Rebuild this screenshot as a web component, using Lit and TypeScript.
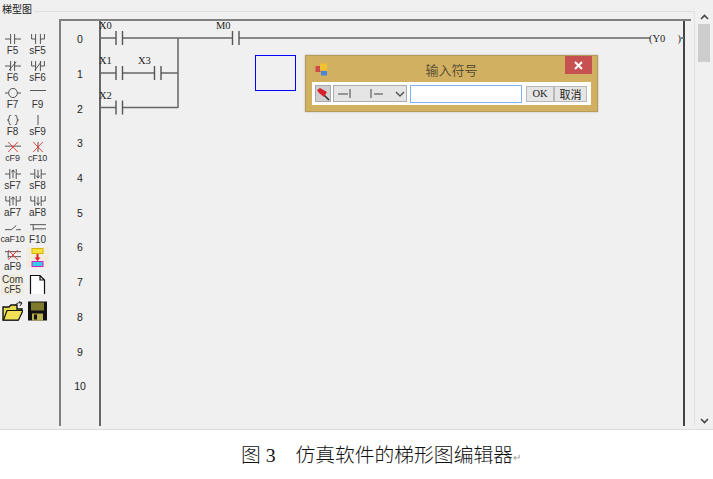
import { LitElement, html, css, svg } from "lit";
import { customElement } from "lit/decorators.js";

const G = "#444";
const line = (d: string, c = G, w = 1.1) => svg`<path d=${d} stroke=${c} stroke-width=${w} fill="none"/>`;
const no = "M0 6H7M7 0V12M12 0V12M12 6H20";
const branch = "M2 0V6H7M7 0V12M13 0V12M13 6H18M18 0V6";
const arrowUp = "M10 11V2M8 4L10 1L12 4";
const arrowDown = "M10 1V10M8 8L10 11L12 8";
const side = "M0 6H6M6 0V12M14 0V12M14 6H20";
const sideB = "M1 0V6H6M6 0V12M14 0V12M14 6H19M19 0V6";
const X = (cx: number, cy: number, r: number) => line(`M${cx - r} ${cy - r}L${cx + r} ${cy + r}M${cx + r} ${cy - r}L${cx - r} ${cy + r}`, "#e8302a", 1.1);

interface Tool { label: string; icon?: unknown; cls?: string; sm?: boolean }
const tools: Tool[] = [
  { label: "F5", icon: line(no) },
  { label: "sF5", icon: line(branch) },
  { label: "F6", icon: line(no + "M5 11L14 1") },
  { label: "sF6", icon: line(branch + "M6 11L14 1") },
  { label: "F7", icon: svg`${line("M0 6H4M16 6H20")}<circle cx="10" cy="6" r="5.5" stroke=${G} stroke-width="1.1" fill="none"/>` },
  { label: "F9", icon: line("M0 3H20") },
  { label: "F8", icon: line("M8 0Q5 0 5 3V5L3 6L5 7V9Q5 12 8 12M12 0Q15 0 15 3V5L17 6L15 7V9Q15 12 12 12") },
  { label: "sF9", icon: line("M10 0V12") },
  { label: "cF9", icon: svg`${line("M0 5H20")}${X(10, 6, 6)}`, sm: true },
  { label: "cF10", icon: svg`${line("M10 0V12")}${X(10, 6, 6)}`, sm: true },
  { label: "sF7", icon: line(side + arrowUp) },
  { label: "sF8", icon: line(side + arrowDown) },
  { label: "aF7", icon: line(sideB + arrowUp) },
  { label: "aF8", icon: line(sideB + arrowDown) },
  { label: "caF10", icon: line("M0 8H8L14 3M14 8H20"), sm: true },
  { label: "F10", icon: line("M0 2H20M4 2V9M4 7H20") },
  { label: "aF9", icon: svg`${line("M0 2H20M4 2V10M4 8H20")}${X(10, 6, 6)}` },
  {
    label: "", cls: "tint",
    icon: svg`<rect x="5" y="1.5" width="11" height="5" fill="#f5e23c" stroke="#d8b000"/>
      <path d="M10.5 7V11" stroke="#e02020" stroke-width="2"/><path d="M7.5 10.5L10.5 14L13.5 10.5Z" fill="#e02020"/>
      <rect x="5" y="14.5" width="11" height="5" fill="#38c8e8" stroke="#d020c0"/>`,
  },
  { label: "Com", cls: "com" },
  {
    label: "", cls: "big",
    icon: svg`<path d="M3.5 1.5H13L17.5 6V20.5H3.5Z M13 1.5V6H17.5" fill="#fff" stroke="#111" stroke-width="1.2"/>`,
  },
  {
    label: "", cls: "big",
    icon: svg`<path d="M1 6H7L9 4H15V8H20L16 19H1Z" fill="#e6dc50" stroke="#111" stroke-width="1.4"/>
      <path d="M1.5 19L5 9.5H21L16.5 19Z" fill="#efe055" stroke="#111" stroke-width="1.2"/>
      <path d="M13 4Q16 0.5 20 2M20 2L17 0.5M20 2L18 5" stroke="#222" fill="none"/>`,
  },
  {
    label: "", cls: "big",
    icon: svg`<rect x="1" y="0.5" width="19" height="19" fill="#111"/><rect x="4" y="1.5" width="13" height="8" fill="#7d7a2e"/>
      <rect x="5" y="12.5" width="11" height="7" fill="#b8b24a"/><rect x="7" y="13.5" width="3" height="5" fill="#111"/>`,
  },
];
const comSub = "cF5";
const numbers = [0, 1, 2, 3, 4, 5, 6, 7, 8, 9, 10];

@customElement("app-root")
export class AppRoot extends LitElement {
  static styles = css`
    :host { display: block; width: 713px; height: 479px; background: #fff; overflow: hidden; position: relative; }
    .window { height: 429px; background: #f0f0f0; border-bottom: 1px solid #dcdcdc; display: flex; flex-direction: column; }
    .head { height: 19px; display: flex; align-items: flex-start; padding-left: 2px; box-sizing: border-box; }
    .head span { font: 10px/18px "Noto Sans CJK SC", sans-serif; color: #222; width: 32px; }
    .head i { width: 661px; height: 0; margin-top: 11px; border-top: 1px solid #dfdfdf; }
    .body { display: flex; height: 407px; }
    .toolbar { width: 59px; padding: 12px 0 0 1px; box-sizing: border-box; display: grid; grid-template-columns: 25px 25px; grid-auto-rows: 27px; align-content: start; }
    .tool { display: flex; flex-direction: column; align-items: center; justify-content: flex-start; width: 23px; height: 25px; color: #333; font: 10px/9px "Liberation Sans", sans-serif; white-space: nowrap; }
    .tool.sm { font-size: 9px; letter-spacing: -0.2px; }
    .tool svg { width: 16px; height: 10px; margin-top: 3px; margin-bottom: 2px; display: block; flex: none; }
    .tool.tint, .tool.com { background: #f1edde; height: 21px; }
    .tool.tint svg, .tool.big svg { width: 21px; height: 20px; margin-top: 0; margin-bottom: 0; }
    .tool.com { line-height: 10px; padding-top: 1px; box-sizing: border-box; }
    .editor { width: 632px; border-top: 2px solid #808080; display: flex; box-sizing: border-box; }
    .gutter { width: 38px; border-left: 2px solid #808080; padding-top: 1px; }
    .num { height: 34.7px; display: flex; align-items: center; justify-content: center; font: 10.5px "Liberation Sans", sans-serif; color: #222; }
    .canvas { width: 586px; border-left: 2px solid #666; border-right: 2px solid #444; box-sizing: border-box; }
    .canvas svg { display: block; width: 582px; height: 405px; overflow: visible; }
    .canvas text { font: 10.5px "Liberation Serif", serif; fill: #222; }
    .rest { width: 3px; }
    .frame { width: 1px; background: #e2e2e2; margin-top: -8px; }
    .scroll { width: 16px; margin-left: 1px; display: flex; flex-direction: column; align-items: center; margin-top: -8px; height: 417px; }
    .scroll svg { width: 9px; height: 6px; display: block; flex: none; }
    .scroll .up { margin-top: 3px; }
    .scroll .down { margin-bottom: 4px; }
    .scroll .thumb { width: 12px; height: 38px; background: #cdcdcd; margin: 4px 0 0; }
    .scroll .track { flex: 1; }
    .caption { display: flex; align-items: center; height: 49px; padding-left: 241px; box-sizing: border-box; font: 300 19.8px/22px "Liberation Serif", "Noto Sans CJK SC", serif; color: #111; white-space: pre; }
    .caption em { font-style: normal; color: #999; font-size: 10px; margin-top: 6px; }
    .cursor { position: absolute; left: 255px; top: 55px; width: 41px; height: 36px; border: 1px solid #0000ff; box-sizing: border-box; }
    .dialog { position: absolute; left: 305px; top: 55px; width: 293px; height: 57px; background: #d2b062; border: 1px solid #b69a58; box-sizing: border-box; box-shadow: 0 0 2px #bbb; display: flex; flex-direction: column; }
    .title { height: 26px; position: relative; display: flex; align-items: center; justify-content: center; font: 13px "Noto Sans CJK SC", sans-serif; color: #5a5035; flex: none; padding-top: 1px; box-sizing: border-box; }
    .appicon { position: absolute; left: 9px; top: 7px; width: 13px; height: 13px; display: block; }
    .close { position: absolute; right: 5px; top: 0; width: 27px; height: 18px; background: #c75050; display: flex; align-items: center; justify-content: center; }
    .close svg { width: 9px; height: 9px; display: block; }
    .panel { margin: 0 6px; height: 23px; background: #fff; display: flex; align-items: center; padding: 0 3px; box-sizing: border-box; }
    .pin { width: 16px; height: 17px; background: #cfcfcf; border: 1px solid #aaa; box-sizing: border-box; display: flex; align-items: center; justify-content: center; flex: none; }
    .pin svg { width: 14px; height: 14px; display: block; }
    .select { width: 74px; height: 17px; margin-left: 2px; background: #e5e5e5; border: 1px solid #acacac; box-sizing: border-box; display: flex; align-items: center; flex: none; }
    .select svg { width: 72px; height: 15px; display: block; }
    .input { width: 112px; height: 18px; margin-left: 3px; background: #fff; border: 1px solid #7eb4ea; box-sizing: border-box; flex: none; }
    .btn { height: 16px; background: #e5e5e5; border: 1px solid #b8b8b8; box-sizing: border-box; display: flex; align-items: center; justify-content: center; color: #222; flex: none; }
    .ok { width: 28px; margin-left: 4px; font: 10.5px "Liberation Serif", serif; }
    .cancel { width: 33px; font: 11px "Noto Sans CJK SC", sans-serif; }
  `;

  private ladder() {
    const bars = (x: number, y: number) => `M${x} ${y - 7}V${y + 7}M${x + 6.5} ${y - 7}V${y + 7}`;
    const o = (x: number) => x - 101;
    const t = (y: number) => y - 21;
    const paths = [
      `M${o(100)} ${t(38)}H${o(116)}M${o(122.5)} ${t(38)}H${o(232.5)}M${o(239)} ${t(38)}H${o(650)}`,
      `M${o(100)} ${t(73)}H${o(116)}M${o(122.5)} ${t(73)}H${o(154.5)}M${o(161)} ${t(73)}H${o(178)}`,
      `M${o(100)} ${t(107.5)}H${o(116)}M${o(122.5)} ${t(107.5)}H${o(178)}`,
      `M${o(178)} ${t(38)}V${t(108)}`,
      `M${o(681)} ${t(38)}H${o(684)}`,
    ].join("");
    const barPaths = [
      bars(o(116), t(38)), bars(o(232.5), t(38)), bars(o(116), t(73)), bars(o(154.5), t(73)), bars(o(116), t(107.5)),
    ].join("");
    return html`<svg viewBox="0 0 582 405">
      <path d=${paths} stroke="#666" stroke-width="1.5" fill="none"/>
      <path d=${barPaths} stroke="#555" stroke-width="1.4" fill="none"/>
      <text x=${o(99)} y=${t(29)}>X0</text>
      <text x=${o(216)} y=${t(29)}>M0</text>
      <text x=${o(99)} y=${t(64)}>X1</text>
      <text x=${o(138)} y=${t(64)}>X3</text>
      <text x=${o(99)} y=${t(99)}>X2</text>
      <text x=${o(649)} y=${t(42)}>(Y0</text>
      <text x=${o(677.5)} y=${t(42)}>)</text>
    </svg>`;
  }

  render() {
    return html`
      <div class="window">
        <div class="head"><span>梯型图</span><i></i></div>
        <div class="body">
          <div class="toolbar">
            ${tools.map((t) => html`<div class="tool ${t.cls ?? ""} ${t.sm ? "sm" : ""}">
              ${t.cls === "com"
                ? html`<span>Com</span><span>${comSub}</span>`
                : html`<svg viewBox=${t.cls ? "0 0 21 20" : "0 0 20 12"} preserveAspectRatio="none">${t.icon}</svg>${t.label}`}
            </div>`)}
          </div>
          <div class="editor">
            <div class="gutter">${numbers.map((n) => html`<div class="num">${n}</div>`)}</div>
            <div class="canvas">${this.ladder()}</div>
          </div>
          <div class="rest"></div>
          <div class="frame"></div>
          <div class="scroll">
            <svg class="up" viewBox="0 0 9 6"><path d="M1 5L4.5 1.5L8 5" stroke="#444" stroke-width="1.6" fill="none"/></svg>
            <div class="thumb"></div>
            <div class="track"></div>
            <svg class="down" viewBox="0 0 9 6"><path d="M1 1L4.5 4.5L8 1" stroke="#444" stroke-width="1.6" fill="none"/></svg>
          </div>
        </div>
      </div>
      <div class="caption">图 3　仿真软件的梯形图编辑器<em>↵</em></div>
      <div class="cursor"></div>
      <div class="dialog">
        <div class="title">
          <svg class="appicon" viewBox="0 0 13 13">
            <rect x="0.5" y="3" width="5" height="6" fill="#d04a4a"/><rect x="5" y="0.5" width="7" height="7" fill="#f2c230"/><rect x="6" y="8" width="6" height="4.5" fill="#4a86d8"/>
          </svg>
          输入符号
          <div class="close"><svg viewBox="0 0 9 9"><path d="M1 1L8 8M8 1L1 8" stroke="#fff" stroke-width="2"/></svg></div>
        </div>
        <div class="panel">
          <div class="pin"><svg viewBox="0 0 14 14"><path d="M13 13L7 7" stroke="#222" stroke-width="1.4"/><path d="M1 3L4 1L11 5L8 10L3 6Z" fill="#d8202a"/></svg></div>
          <div class="select"><svg viewBox="0 0 72 15"><path d="M4 8H14M16 3V12M37 3V12M40 8H49" stroke="#444" fill="none"/><path d="M62 6L66 10L70 6" stroke="#555" stroke-width="1.5" fill="none"/></svg></div>
          <div class="input"></div>
          <div class="btn ok">OK</div>
          <div class="btn cancel">取消</div>
        </div>
      </div>
    `;
  }
}
